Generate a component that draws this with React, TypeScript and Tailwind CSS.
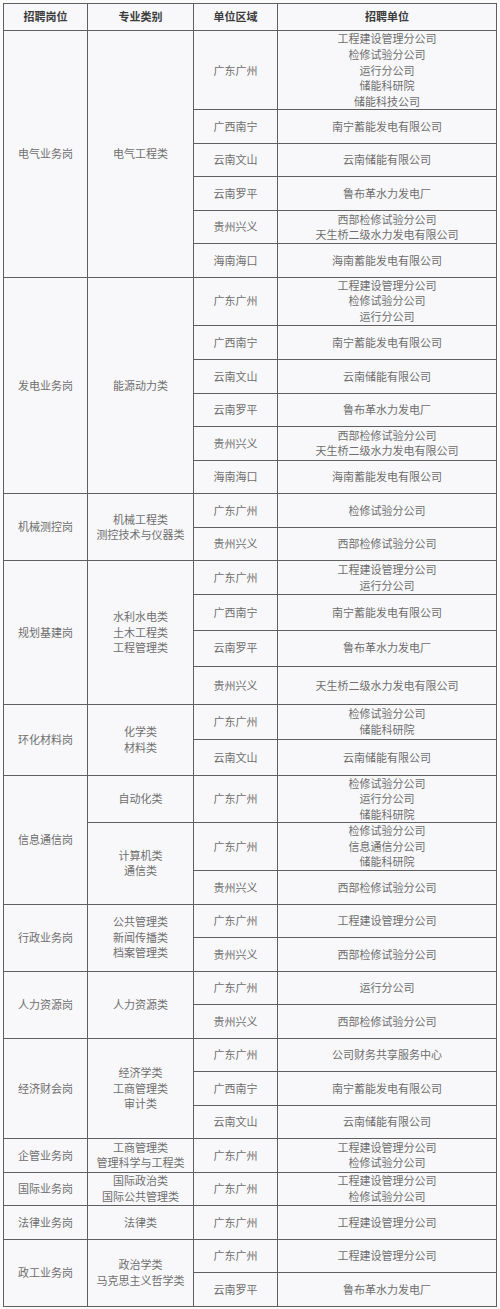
/**
 * Tabela de vagas — quatro colunas (cargo, área, região, unidade) com
 * células mescladas por rowSpan, como na planilha original.
 */
interface Linha {
  regiao: string;
  unidades: string[];
  altura?: string;
}

interface Area {
  nomes: string[];
  linhas: Linha[];
}

interface Grupo {
  cargo: string;
  areas: Area[];
}

const grupos: Grupo[] = [
  {
    cargo: "电气业务岗",
    areas: [
      {
        nomes: ["电气工程类"],
        linhas: [
          {
            regiao: "广东广州",
            unidades: ["工程建设管理分公司", "检修试验分公司", "运行分公司", "储能科研院", "储能科技公司"],
            altura: "h-[78.6px]",
          },
          { regiao: "广西南宁", unidades: ["南宁蓄能发电有限公司"] },
          { regiao: "云南文山", unidades: ["云南储能有限公司"] },
          { regiao: "云南罗平", unidades: ["鲁布革水力发电厂"] },
          { regiao: "贵州兴义", unidades: ["西部检修试验分公司", "天生桥二级水力发电有限公司"] },
          { regiao: "海南海口", unidades: ["海南蓄能发电有限公司"] },
        ],
      },
    ],
  },
  {
    cargo: "发电业务岗",
    areas: [
      {
        nomes: ["能源动力类"],
        linhas: [
          {
            regiao: "广东广州",
            unidades: ["工程建设管理分公司", "检修试验分公司", "运行分公司"],
            altura: "h-[46.8px]",
          },
          { regiao: "广西南宁", unidades: ["南宁蓄能发电有限公司"], altura: "h-[34.5px]" },
          { regiao: "云南文山", unidades: ["云南储能有限公司"] },
          { regiao: "云南罗平", unidades: ["鲁布革水力发电厂"] },
          { regiao: "贵州兴义", unidades: ["西部检修试验分公司", "天生桥二级水力发电有限公司"] },
          { regiao: "海南海口", unidades: ["海南蓄能发电有限公司"] },
        ],
      },
    ],
  },
  {
    cargo: "机械测控岗",
    areas: [
      {
        nomes: ["机械工程类", "测控技术与仪器类"],
        linhas: [
          { regiao: "广东广州", unidades: ["检修试验分公司"] },
          { regiao: "贵州兴义", unidades: ["西部检修试验分公司"] },
        ],
      },
    ],
  },
  {
    cargo: "规划基建岗",
    areas: [
      {
        nomes: ["水利水电类", "土木工程类", "工程管理类"],
        linhas: [
          { regiao: "广东广州", unidades: ["工程建设管理分公司", "运行分公司"], altura: "h-[34px]" },
          { regiao: "广西南宁", unidades: ["南宁蓄能发电有限公司"], altura: "h-[35.6px]" },
          { regiao: "云南罗平", unidades: ["鲁布革水力发电厂"], altura: "h-[36px]" },
          { regiao: "贵州兴义", unidades: ["天生桥二级水力发电有限公司"], altura: "h-[38.2px]" },
        ],
      },
    ],
  },
  {
    cargo: "环化材料岗",
    areas: [
      {
        nomes: ["化学类", "材料类"],
        linhas: [
          { regiao: "广东广州", unidades: ["检修试验分公司", "储能科研院"], altura: "h-[35.3px]" },
          { regiao: "云南文山", unidades: ["云南储能有限公司"], altura: "h-[35.3px]" },
        ],
      },
    ],
  },
  {
    cargo: "信息通信岗",
    areas: [
      {
        nomes: ["自动化类"],
        linhas: [
          {
            regiao: "广东广州",
            unidades: ["检修试验分公司", "运行分公司", "储能科研院"],
            altura: "h-[47.2px]",
          },
        ],
      },
      {
        nomes: ["计算机类", "通信类"],
        linhas: [
          {
            regiao: "广东广州",
            unidades: ["检修试验分公司", "信息通信分公司", "储能科研院"],
            altura: "h-[47.3px]",
          },
          { regiao: "贵州兴义", unidades: ["西部检修试验分公司"] },
        ],
      },
    ],
  },
  {
    cargo: "行政业务岗",
    areas: [
      {
        nomes: ["公共管理类", "新闻传播类", "档案管理类"],
        linhas: [
          { regiao: "广东广州", unidades: ["工程建设管理分公司"] },
          { regiao: "贵州兴义", unidades: ["西部检修试验分公司"] },
        ],
      },
    ],
  },
  {
    cargo: "人力资源岗",
    areas: [
      {
        nomes: ["人力资源类"],
        linhas: [
          { regiao: "广东广州", unidades: ["运行分公司"] },
          { regiao: "贵州兴义", unidades: ["西部检修试验分公司"] },
        ],
      },
    ],
  },
  {
    cargo: "经济财会岗",
    areas: [
      {
        nomes: ["经济学类", "工商管理类", "审计类"],
        linhas: [
          { regiao: "广东广州", unidades: ["公司财务共享服务中心"] },
          { regiao: "广西南宁", unidades: ["南宁蓄能发电有限公司"] },
          { regiao: "云南文山", unidades: ["云南储能有限公司"] },
        ],
      },
    ],
  },
  {
    cargo: "企管业务岗",
    areas: [
      {
        nomes: ["工商管理类", "管理科学与工程类"],
        linhas: [{ regiao: "广东广州", unidades: ["工程建设管理分公司", "检修试验分公司"] }],
      },
    ],
  },
  {
    cargo: "国际业务岗",
    areas: [
      {
        nomes: ["国际政治类", "国际公共管理类"],
        linhas: [{ regiao: "广东广州", unidades: ["工程建设管理分公司", "检修试验分公司"] }],
      },
    ],
  },
  {
    cargo: "法律业务岗",
    areas: [
      {
        nomes: ["法律类"],
        linhas: [{ regiao: "广东广州", unidades: ["工程建设管理分公司"] }],
      },
    ],
  },
  {
    cargo: "政工业务岗",
    areas: [
      {
        nomes: ["政治学类", "马克思主义哲学类"],
        linhas: [
          { regiao: "广东广州", unidades: ["工程建设管理分公司"] },
          { regiao: "云南罗平", unidades: ["鲁布革水力发电厂"] },
        ],
      },
    ],
  },
];

const celula = "border border-[#5f5f5f] p-0 text-center align-middle";

function Texto({ linhas }: { linhas: string[] }) {
  return (
    <>
      {linhas.map((l) => (
        <div key={l}>{l}</div>
      ))}
    </>
  );
}

function LinhasDoGrupo({ grupo }: { grupo: Grupo }) {
  const total = grupo.areas.reduce((soma, a) => soma + a.linhas.length, 0);

  return (
    <>
      {grupo.areas.map((area, ia) =>
        area.linhas.map((linha, il) => (
          <tr key={`${ia}-${il}`} className={linha.altura ?? "h-[33.5px]"}>
            {ia === 0 && il === 0 && (
              <td rowSpan={total} className={celula}>
                {grupo.cargo}
              </td>
            )}
            {il === 0 && (
              <td rowSpan={area.linhas.length} className={celula}>
                <Texto linhas={area.nomes} />
              </td>
            )}
            <td className={celula}>{linha.regiao}</td>
            <td className={celula}>
              <Texto linhas={linha.unidades} />
            </td>
          </tr>
        ))
      )}
    </>
  );
}

export default function App() {
  return (
    <div className="min-h-[1309px] bg-[#fbfbfc] pl-[3px] pt-[3px] font-['Noto_Sans_CJK_SC','Noto_Sans',sans-serif] text-[11px] leading-[15.6px] text-[#6e6e6e]">
      <table className="w-[494px] table-fixed border-collapse bg-[#f8f8fa]">
        <colgroup>
          <col className="w-[84px]" />
          <col className="w-[106px]" />
          <col className="w-[84px]" />
          <col />
        </colgroup>
        <thead>
          <tr className="h-[27.4px]">
            {["招聘岗位", "专业类别", "单位区域", "招聘单位"].map((t) => (
              <th key={t} className={`${celula} font-bold text-[#3c3c3c]`}>
                {t}
              </th>
            ))}
          </tr>
        </thead>
        <tbody>
          {grupos.map((g) => (
            <LinhasDoGrupo key={g.cargo} grupo={g} />
          ))}
        </tbody>
      </table>
    </div>
  );
}
